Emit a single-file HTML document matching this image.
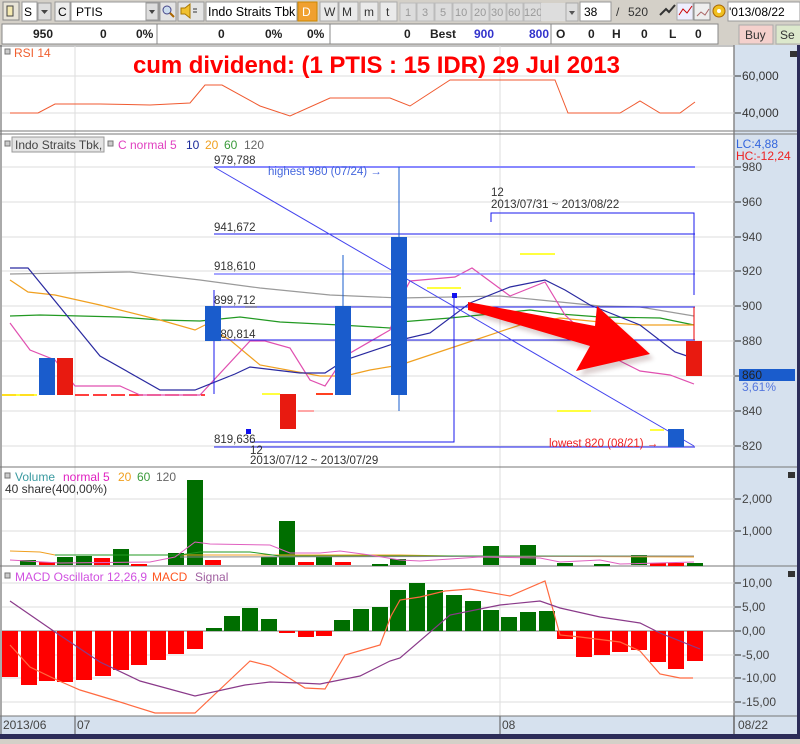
<!DOCTYPE html>
<html><head><meta charset="utf-8"><style>
body{margin:0;width:800px;height:739px;overflow:hidden;background:#d4d0c8;font-family:"Liberation Sans",sans-serif;}
svg text{font-family:"Liberation Sans",sans-serif;}
</style></head><body>
<svg width="800" height="739" viewBox="0 0 800 739" xmlns="http://www.w3.org/2000/svg" font-size="12">
<defs><filter id="bl"><feGaussianBlur stdDeviation="2"/></filter></defs>
<!-- toolbar row1 -->
<rect x="0" y="0" width="800" height="23" fill="#d4d0c8"/>
<rect x="3" y="2" width="16" height="18" fill="#e8e4d8" stroke="#888"/>
<path d="M7 6h6v10h-6z" fill="#f4e9b0" stroke="#444"/>
<rect x="22" y="2" width="15" height="19" fill="#fff" stroke="#999"/><text x="24" y="16">S</text>
<rect x="38" y="3" width="13" height="17" fill="#ddd" stroke="#999"/><path d="M41 10h7l-3.5 4z" fill="#444"/>
<rect x="55" y="2" width="15" height="19" fill="#eee" stroke="#999"/><text x="58" y="16">C</text>
<rect x="71" y="2" width="88" height="19" fill="#fff" stroke="#999"/><text x="76" y="16">PTIS</text>
<rect x="146" y="3" width="12" height="17" fill="#ddd" stroke="#999"/><path d="M149 10h6l-3 4z" fill="#444"/>
<rect x="160" y="2" width="16" height="19" fill="#e4e4e4" stroke="#999"/><circle cx="167" cy="10" r="4" fill="#cde" stroke="#448"/><path d="M170 13l4 4" stroke="#a60" stroke-width="2"/>
<rect x="178" y="2" width="26" height="19" fill="#e4e4e4" stroke="#999"/><path d="M181 8h4l5-4v14l-5-4h-4z" fill="#f0c030" stroke="#a70"/><path d="M193 9h4M193 12h4" stroke="#333"/>
<rect x="206" y="2" width="91" height="19" fill="#fff" stroke="#999"/><text x="208" y="16" font-size="12.5">Indo Straits Tbk</text>
<rect x="298" y="2" width="19" height="19" fill="#f0a030" stroke="#c80"/><text x="302" y="16" fill="#fff">D</text>
<g fill="#eaeaea" stroke="#aaa"><rect x="320" y="2" width="18" height="19"/><rect x="339" y="2" width="19" height="19"/><rect x="360" y="2" width="18" height="19"/><rect x="380" y="2" width="17" height="19"/></g>
<text x="324" y="16" fill="#333">W</text><text x="342" y="16" fill="#333">M</text><text x="364" y="16" fill="#333">m</text><text x="386" y="16" fill="#333">t</text>
<g fill="#dcdcdc" stroke="#bbb"><rect x="400" y="3" width="16" height="18"/><rect x="417" y="3" width="17" height="18"/><rect x="435" y="3" width="17" height="18"/><rect x="453" y="3" width="18" height="18"/><rect x="472" y="3" width="17" height="18"/><rect x="490" y="3" width="16" height="18"/><rect x="507" y="3" width="16" height="18"/><rect x="524" y="3" width="17" height="18"/></g>
<g fill="#999" font-size="11"><text x="405" y="16">1</text><text x="422" y="16">3</text><text x="440" y="16">5</text><text x="455" y="16">10</text><text x="474" y="16">20</text><text x="491" y="16">30</text><text x="508" y="16">60</text><text x="524" y="16">120</text></g>
<rect x="541" y="3" width="25" height="18" fill="#ddd"/>
<rect x="566" y="3" width="12" height="18" fill="#ddd" stroke="#aaa"/><path d="M569 11h6l-3 4z" fill="#555"/>
<rect x="580" y="2" width="31" height="19" fill="#fff" stroke="#999"/><text x="584" y="16">38</text>
<text x="616" y="16" fill="#333">/</text><text x="628" y="16" fill="#333">520</text>
<path d="M660 15l6-6 3 3 6-7" stroke="#333" stroke-width="2" fill="none"/>
<rect x="677" y="3" width="16" height="17" fill="#eef" stroke="#aaa"/><path d="M679 15l4-6 4 4 5-7" stroke="#c00" fill="none"/>
<rect x="694" y="3" width="16" height="17" fill="#eee" stroke="#888"/><path d="M697 16l4-4 4 3 4-6" stroke="#a66" fill="none"/>
<circle cx="719" cy="11" r="6" fill="#f0c020" stroke="#a60"/><circle cx="719" cy="11" r="2" fill="#fff"/>
<rect x="728" y="2" width="72" height="19" fill="#fff" stroke="#999"/><text x="729" y="16">'013/08/22</text>
<!-- row2 -->
<rect x="0" y="23" width="800" height="22" fill="#d4d0c8"/>
<rect x="2" y="24" width="716" height="20" fill="#fff" stroke="#888"/>
<line x1="157" y1="24" x2="157" y2="44" stroke="#888"/><line x1="330" y1="24" x2="330" y2="44" stroke="#888"/><line x1="551" y1="24" x2="551" y2="44" stroke="#888"/>
<g font-size="12" font-weight="bold" fill="#222">
<text x="33" y="38">950</text><text x="100" y="38">0</text><text x="136" y="38">0%</text><text x="218" y="38">0</text><text x="265" y="38">0%</text><text x="307" y="38">0%</text>
<text x="404" y="38">0</text><text x="430" y="38">Best</text><text x="474" y="38" fill="#33c">900</text><text x="529" y="38" fill="#33c">800</text>
<text x="556" y="38">O</text><text x="588" y="38">0</text><text x="612" y="38">H</text><text x="641" y="38">0</text><text x="669" y="38">L</text><text x="695" y="38">0</text></g>
<rect x="739" y="25" width="34" height="19" fill="#f4d0cc" stroke="#aaa"/><text x="745" y="39" fill="#333">Buy</text>
<rect x="776" y="25" width="30" height="19" fill="#dce8cc" stroke="#aaa"/><text x="780" y="39" fill="#333">Se</text>

<!-- chart area -->
<rect x="0" y="45" width="800" height="694" fill="#fff"/>
<rect x="734" y="45" width="66" height="690" fill="#d6e1ee"/>
<rect x="0" y="716" width="800" height="18" fill="#d6e1ee"/>
<line x1="0" y1="46" x2="734" y2="46" stroke="#888"/>
<line x1="734" y1="45" x2="734" y2="734" stroke="#888" stroke-width="1.5"/>
<line x1="1" y1="45" x2="1" y2="734" stroke="#555"/>
<g stroke="#ddd"><line x1="75" y1="46" x2="75" y2="716"/><line x1="500" y1="46" x2="500" y2="716"/></g>
<g stroke="#555"><line x1="75" y1="716" x2="75" y2="734"/><line x1="500" y1="716" x2="500" y2="734"/><line x1="734" y1="716" x2="734" y2="734"/></g>
<g stroke="#777"><line x1="0" y1="131" x2="800" y2="131"/><line x1="0" y1="134" x2="800" y2="134"/><line x1="0" y1="467" x2="800" y2="467"/><line x1="0" y1="566" x2="800" y2="566"/><line x1="0" y1="716" x2="800" y2="716"/></g>
<rect x="0" y="734" width="800" height="5" fill="#2c2c58"/>
<rect x="797" y="45" width="3" height="694" fill="#2c2c58"/>

<!-- RSI -->
<g stroke="#ddd"><line x1="2" y1="76" x2="734" y2="76"/><line x1="2" y1="113" x2="734" y2="113"/></g>
<rect x="5" y="49" width="5" height="5" fill="#ccc" stroke="#777"/><text x="14" y="57" fill="#f06030">RSI 14</text>
<polyline fill="none" stroke="#f05a30" points="10,113 38,113 55,104 75,104 100,104 150,105 190,103 205,85 222,85 260,106 290,116 330,98 390,98 410,106 450,80 555,80 568,113 620,113 640,101 660,113 680,113 695,102"/>
<text x="133" y="73" font-size="24" font-weight="bold" fill="#f00" textLength="487">cum dividend: (1 PTIS : 15 IDR) 29 Jul 2013</text>
<g fill="#333"><text x="742" y="80">60,000</text><text x="742" y="117">40,000</text></g>
<g stroke="#333"><line x1="735" y1="76" x2="741" y2="76"/><line x1="735" y1="113" x2="741" y2="113"/></g>
<rect x="790" y="51" width="7" height="6" fill="#333"/>

<!-- Price panel grid -->
<g stroke="#ddd"><line x1="2" y1="167" x2="734" y2="167"/><line x1="2" y1="202" x2="734" y2="202"/><line x1="2" y1="237" x2="734" y2="237"/><line x1="2" y1="271" x2="734" y2="271"/><line x1="2" y1="306" x2="734" y2="306"/><line x1="2" y1="341" x2="734" y2="341"/><line x1="2" y1="376" x2="734" y2="376"/><line x1="2" y1="411" x2="734" y2="411"/><line x1="2" y1="446" x2="734" y2="446"/></g>
<rect x="5" y="141" width="5" height="5" fill="#ccc" stroke="#777"/>
<rect x="12" y="137" width="92" height="15" fill="#e4e4e4" stroke="#999"/><text x="15" y="149" fill="#444">Indo Straits Tbk,</text>
<rect x="108" y="141" width="5" height="5" fill="#ccc" stroke="#777"/>
<text x="118" y="149" fill="#e040c0">C normal 5</text><text x="186" y="149" fill="#1a2a9a">10</text><text x="205" y="149" fill="#f0a020">20</text><text x="224" y="149" fill="#3a9a3a">60</text><text x="244" y="149" fill="#666">120</text>
<text x="736" y="148" fill="#3366dd">LC:4,88</text><text x="736" y="160" fill="#ee2222">HC:-12,24</text>
<g fill="#444"><text x="742" y="171">980</text><text x="742" y="206">960</text><text x="742" y="241">940</text><text x="742" y="275">920</text><text x="742" y="310">900</text><text x="742" y="345">880</text><text x="742" y="415">840</text><text x="742" y="450">820</text></g>
<g stroke="#333"><line x1="735" y1="167" x2="741" y2="167"/><line x1="735" y1="202" x2="741" y2="202"/><line x1="735" y1="237" x2="741" y2="237"/><line x1="735" y1="271" x2="741" y2="271"/><line x1="735" y1="306" x2="741" y2="306"/><line x1="735" y1="341" x2="741" y2="341"/><line x1="735" y1="376" x2="741" y2="376"/><line x1="735" y1="411" x2="741" y2="411"/><line x1="735" y1="446" x2="741" y2="446"/></g>
<rect x="739" y="369" width="56" height="12" fill="#1a5ccc"/><text x="742" y="379" fill="#222">860</text>
<text x="742" y="391" fill="#5577dd">3,61%</text>

<g stroke-width="1.5"><path d="M2 395h34M75 395h130" stroke="#f00" stroke-dasharray="14 4"/><path d="M2 395h35" stroke="#ff0"/><path d="M262 394h18M316 394h17" stroke="#ff0"/><path d="M298 411h16" stroke="#f88"/><path d="M316 394h17" stroke="#f00"/><path d="M520 254h35M427 288h34M557 411h34M650 430h14M245 307h12" stroke="#ff0"/></g>
<g fill="none" stroke-width="1.2">
<polyline stroke="#9a9a9a" points="10,274 130,272 200,280 260,288 330,295 400,298 500,296 540,300 600,306 640,307 694,316"/>
<polyline stroke="#229922" points="10,316 40,315 120,317 160,320 200,321 240,317 280,322 340,325 390,328 400,322 450,318 500,313 530,310 560,314 600,317 660,318 694,325"/>
<polyline stroke="#f0a020" points="10,280 28,292 55,295 100,305 160,320 195,330 205,325 230,340 260,365 320,376 345,376 370,370 400,365 460,345 520,325 560,318 600,322 640,325 694,325"/>
<polyline stroke="#e050b0" points="10,323 30,350 55,360 75,386 120,386 140,395 200,395 250,341 265,341 290,348 310,380 325,386 345,356 390,330 400,300 410,281 455,277 472,268 510,296 545,282 565,315 580,329 600,350 620,361 640,371 670,375 694,384"/>
<polyline stroke="#2a2aa0" points="10,268 28,268 100,356 160,390 195,390 235,374 250,367 300,373 325,373 345,360 390,345 400,340 430,333 470,303 510,287 545,280 565,290 590,305 640,325 675,352 690,357"/>
</g>
<g stroke="#1a1aee"><line x1="214" y1="167" x2="695" y2="167" stroke="#8888ff" stroke-width="2"/><line x1="214" y1="234" x2="695" y2="234"/><line x1="214" y1="274" x2="695" y2="274" stroke="#8888ff" stroke-width="1.5"/><line x1="214" y1="307" x2="695" y2="307"/><line x1="214" y1="340" x2="695" y2="340"/><line x1="214" y1="447" x2="695" y2="447"/>
<line x1="214" y1="290" x2="214" y2="394"/><line x1="214" y1="167" x2="694" y2="446" stroke="#4444ee"/>
<polyline fill="none" points="250,442 454,442 454,295"/><polyline fill="none" points="491,222 491,213 694,213 694,295"/></g>
<line x1="694" y1="307" x2="694" y2="340" stroke="#e00"/>
<rect x="246" y="429" width="5" height="5" fill="#11e"/><rect x="452" y="293" width="5" height="5" fill="#11e"/>
<g fill="#333" font-size="11.5"><text x="214" y="164">979,788</text><text x="214" y="231">941,672</text><text x="214" y="270">918,610</text><text x="214" y="304">899,712</text><text x="214" y="338">880,814</text><text x="214" y="443">819,636</text><text x="250" y="454">12</text><text x="250" y="464">2013/07/12 ~ 2013/07/29</text><text x="491" y="196">12</text><text x="491" y="208">2013/07/31 ~ 2013/08/22</text></g>
<text x="268" y="175" fill="#4466dd" font-size="11.5">highest 980 (07/24) →</text>
<text x="549" y="447" fill="#ee2222" font-size="11.5">lowest 820 (08/21) →</text>
<g fill="#1a5ccc"><rect x="39" y="358" width="16" height="37"/><rect x="205" y="306" width="16" height="35"/><rect x="335" y="306" width="16" height="89"/><rect x="391" y="237" width="16" height="158"/><rect x="668" y="429" width="16" height="18"/></g>
<g stroke="#1a5ccc"><line x1="343" y1="255" x2="343" y2="306"/><line x1="399" y1="167" x2="399" y2="237"/><line x1="399" y1="395" x2="399" y2="411"/></g>
<g fill="#e81a10"><rect x="57" y="358" width="16" height="37"/><rect x="280" y="394" width="16" height="35"/><rect x="686" y="341" width="16" height="35"/></g>
<!-- big arrow -->
<polygon points="468,302 595,326 597,306 650,354 576,371 590,346 468,310" fill="#400" opacity="0.18" filter="url(#bl)" transform="translate(4,5)"/>
<polygon points="468,302 595,326 597,306 650,354 576,371 590,346 468,310" fill="#f00"/>

<!-- Volume -->
<g stroke="#ddd"><line x1="2" y1="499" x2="734" y2="499"/><line x1="2" y1="531" x2="734" y2="531"/></g>
<rect x="5" y="473" width="5" height="5" fill="#ccc" stroke="#777"/>
<text x="15" y="481" fill="#3a9aa0">Volume</text><text x="63" y="481" fill="#e020c0">normal 5</text><text x="118" y="481" fill="#f0a020">20</text><text x="137" y="481" fill="#3a9a3a">60</text><text x="156" y="481" fill="#666">120</text>
<text x="5" y="493" fill="#333">40 share(400,00%)</text>
<g fill="#006e00"><rect x="20" y="560" width="16" height="5"/><rect x="57" y="557" width="16" height="8"/><rect x="76" y="556" width="16" height="9"/><rect x="113" y="549" width="16" height="16"/><rect x="168" y="553" width="16" height="12"/><rect x="187" y="480" width="16" height="85"/><rect x="261" y="557" width="16" height="8"/><rect x="279" y="521" width="16" height="44"/><rect x="316" y="557" width="16" height="8"/><rect x="372" y="564" width="16" height="2"/><rect x="390" y="559" width="16" height="6"/><rect x="483" y="546" width="16" height="19"/><rect x="520" y="545" width="16" height="20"/><rect x="557" y="563" width="16" height="3"/><rect x="594" y="564" width="16" height="2"/><rect x="631" y="555" width="16" height="10"/><rect x="687" y="563" width="16" height="3"/></g>
<g fill="#f00"><rect x="39" y="562" width="16" height="3"/><rect x="94" y="558" width="16" height="7"/><rect x="131" y="564" width="16" height="2"/><rect x="205" y="560" width="16" height="5"/><rect x="298" y="562" width="16" height="3"/><rect x="335" y="562" width="16" height="3"/><rect x="650" y="563" width="16" height="3"/><rect x="668" y="563" width="16" height="3"/></g>
<g fill="none"><polyline stroke="#f0a020" points="10,551 40,552 55,555 400,555 450,556 694,557"/><polyline stroke="#229922" points="55,555 180,555 200,552 250,552 280,556 694,556"/><polyline stroke="#888" points="180,557 694,556"/><polyline stroke="#e060c0" points="10,560 60,563 150,562 175,557 195,542 210,544 270,545 290,553 320,553 340,551 370,555 400,560 420,561 480,557 540,558 560,562 600,560 620,564 694,562"/></g>
<g fill="#444"><text x="742" y="503">2,000</text><text x="742" y="535">1,000</text></g>
<g stroke="#333"><line x1="735" y1="499" x2="741" y2="499"/><line x1="735" y1="531" x2="741" y2="531"/></g>
<rect x="788" y="472" width="7" height="6" fill="#333"/>

<!-- MACD -->
<g stroke="#ddd"><line x1="2" y1="583" x2="734" y2="583"/><line x1="2" y1="607" x2="734" y2="607"/><line x1="2" y1="655" x2="734" y2="655"/><line x1="2" y1="678" x2="734" y2="678"/><line x1="2" y1="702" x2="734" y2="702"/></g>
<line x1="2" y1="631" x2="734" y2="631" stroke="#777"/>
<rect x="5" y="573" width="5" height="5" fill="#ccc" stroke="#777"/>
<text x="15" y="581" fill="#d050e0">MACD Oscillator 12,26,9</text><text x="152" y="581" fill="#ff5520">MACD</text><text x="195" y="581" fill="#a060a0">Signal</text>
<g fill="#f00"><rect x="2" y="631" width="16" height="46"/><rect x="21" y="631" width="16" height="54"/><rect x="39" y="631" width="16" height="50"/><rect x="57" y="631" width="16" height="51"/><rect x="76" y="631" width="16" height="49"/><rect x="95" y="631" width="16" height="45"/><rect x="113" y="631" width="16" height="39"/><rect x="131" y="631" width="16" height="34"/><rect x="150" y="631" width="16" height="29"/><rect x="168" y="631" width="16" height="23"/><rect x="187" y="631" width="16" height="18"/><rect x="279" y="631" width="16" height="2"/><rect x="298" y="631" width="16" height="6"/><rect x="316" y="631" width="16" height="5"/><rect x="557" y="631" width="16" height="8"/><rect x="576" y="631" width="16" height="26"/><rect x="594" y="631" width="16" height="24"/><rect x="612" y="631" width="16" height="21"/><rect x="631" y="631" width="16" height="19"/><rect x="650" y="631" width="16" height="31"/><rect x="668" y="631" width="16" height="38"/><rect x="687" y="631" width="16" height="30"/></g>
<g fill="#006e00"><rect x="206" y="628" width="16" height="3"/><rect x="224" y="616" width="16" height="15"/><rect x="242" y="608" width="16" height="23"/><rect x="261" y="619" width="16" height="12"/><rect x="334" y="620" width="16" height="11"/><rect x="353" y="609" width="16" height="22"/><rect x="372" y="607" width="16" height="24"/><rect x="390" y="590" width="16" height="41"/><rect x="409" y="583" width="16" height="48"/><rect x="427" y="590" width="16" height="41"/><rect x="446" y="595" width="16" height="36"/><rect x="465" y="601" width="16" height="30"/><rect x="483" y="610" width="16" height="21"/><rect x="501" y="617" width="16" height="14"/><rect x="520" y="612" width="16" height="19"/><rect x="539" y="611" width="16" height="20"/></g>
<g fill="none" stroke-width="1.2"><polyline stroke="#ff6a40" points="10,645 30,667 57,680 80,690 120,702 155,713 195,713 250,661 270,666 305,688 325,689 345,655 380,645 391,616 400,600 420,597 445,591 470,589 510,596 545,581 560,635 580,637 620,642 640,651 660,674 680,678 693,678"/>
<polyline stroke="#8a3a8a" points="10,601 55,632 100,662 140,681 195,696 245,685 270,682 300,683 320,684 360,676 390,661 400,658 450,615 500,605 540,601 560,608 600,617 640,623 660,633 700,649"/></g>
<g fill="#444"><text x="742" y="587">10,00</text><text x="742" y="611">5,00</text><text x="742" y="635">0,00</text><text x="742" y="659">-5,00</text><text x="742" y="682">-10,00</text><text x="742" y="706">-15,00</text></g>
<g stroke="#333"><line x1="735" y1="583" x2="741" y2="583"/><line x1="735" y1="607" x2="741" y2="607"/><line x1="735" y1="631" x2="741" y2="631"/><line x1="735" y1="655" x2="741" y2="655"/><line x1="735" y1="678" x2="741" y2="678"/><line x1="735" y1="702" x2="741" y2="702"/></g>
<rect x="788" y="571" width="7" height="6" fill="#333"/>
<g fill="#444"><text x="3" y="729">2013/06</text><text x="77" y="729">07</text><text x="502" y="729">08</text><text x="738" y="729">08/22</text></g>
</svg>
</body></html>
